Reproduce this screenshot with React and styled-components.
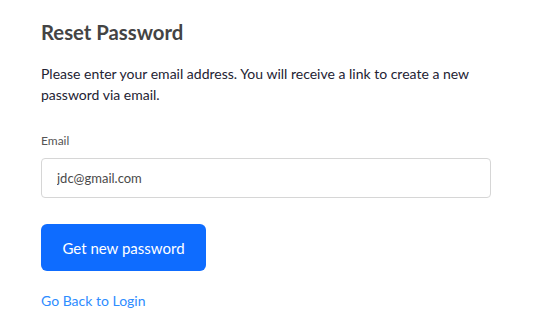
import React from 'react'
import styled, { createGlobalStyle } from 'styled-components'

const GlobalStyle = createGlobalStyle`
  body {
    margin: 0;
    background: #ffffff;
    font-family: Lato, "Open Sans", sans-serif;
  }
`

const Page = styled.div`
  padding: 18px 41px 0 41px;
  width: 450px;
`

const Title = styled.h1`
  margin: 0;
  font-size: 20.3px;
  font-weight: 700;
  line-height: 28px;
  color: #444;
`

const Intro = styled.p`
  margin: 17px 0 0 0;
  font-size: 14px;
  line-height: 21px;
  color: #232333;
`

const Field = styled.div`
  margin-top: 28px;
  display: flex;
  flex-direction: column;
`

const Label = styled.label`
  font-size: 12px;
  line-height: 16px;
  color: #555;
  margin-bottom: 9px;
`

const Input = styled.input`
  box-sizing: border-box;
  width: 450px;
  height: 40px;
  padding: 0 15px;
  border: 1px solid #d6d6d6;
  border-radius: 4px;
  font-family: Lato, sans-serif;
  font-size: 13px;
  color: #4a4a4a;
  outline: none;
`

const SubmitButton = styled.button`
  margin-top: 26px;
  width: 165px;
  height: 47px;
  border: none;
  border-radius: 6px;
  background: #0e6cff;
  color: #ffffff;
  font-family: Lato, sans-serif;
  font-size: 15px;
  cursor: pointer;
`

const BackLink = styled.a`
  display: block;
  margin-top: 20px;
  font-size: 14px;
  line-height: 20px;
  color: #2d8cff;
  text-decoration: none;
`

const App = () => {
  return (
    <Page>
      <GlobalStyle />
      <Title>Reset Password</Title>
      <Intro>
        Please enter your email address. You will receive a link to create a new
        password via email.
      </Intro>
      <Field>
        <Label>Email</Label>
        <Input defaultValue="jdc@gmail.com" />
      </Field>
      <SubmitButton>Get new password</SubmitButton>
      <BackLink href="#">Go Back to Login</BackLink>
    </Page>
  )
}

export default App
